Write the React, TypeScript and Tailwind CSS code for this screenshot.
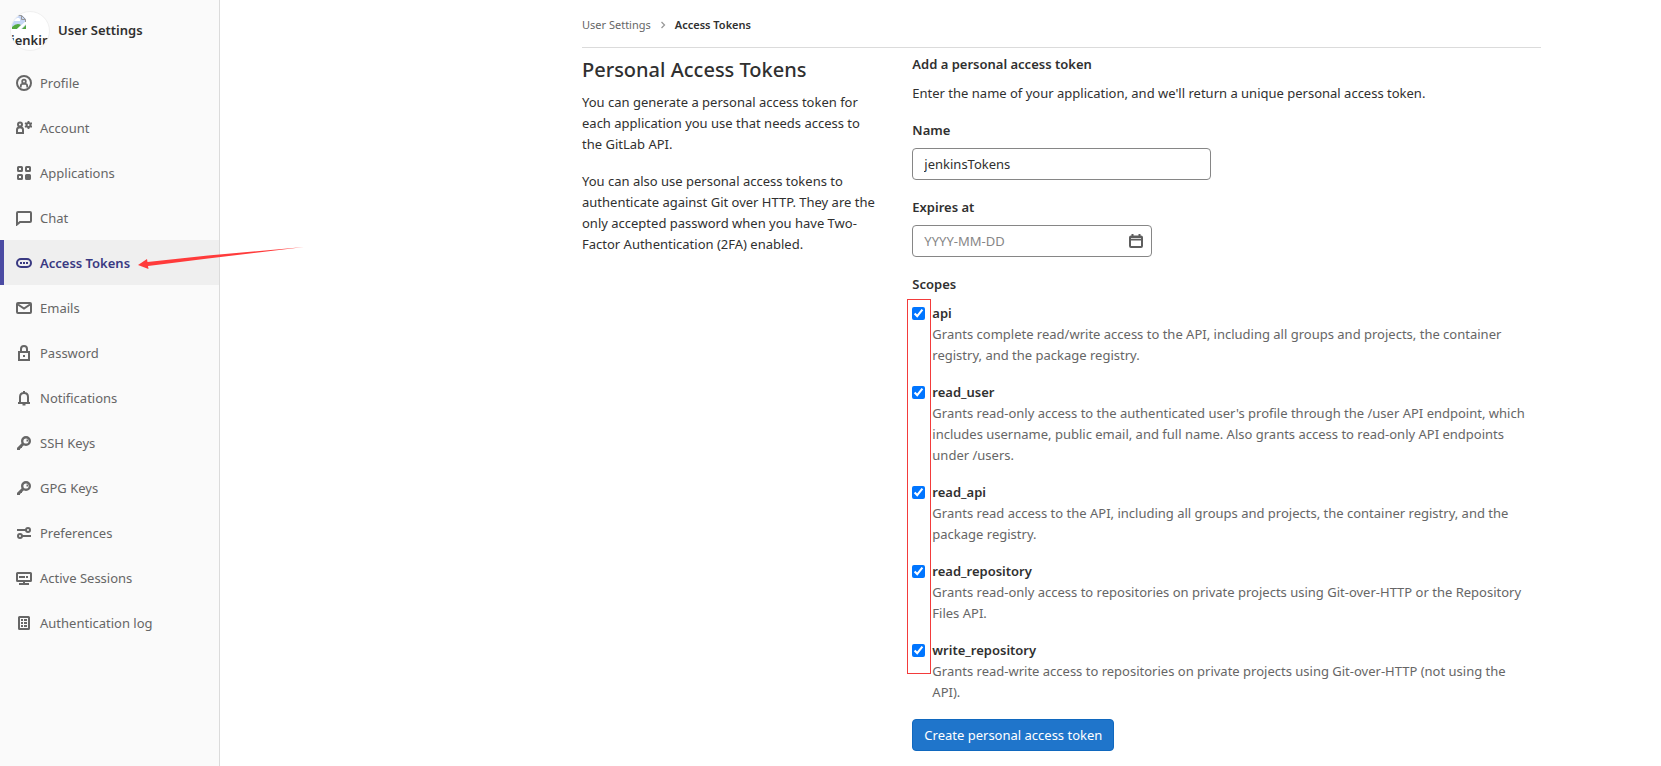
import { useState } from 'react'

const NAV_ITEMS = [
  { label: 'Profile', icon: 'profile' },
  { label: 'Account', icon: 'account' },
  { label: 'Applications', icon: 'applications' },
  { label: 'Chat', icon: 'chat' },
  { label: 'Access Tokens', icon: 'token', active: true },
  { label: 'Emails', icon: 'mail' },
  { label: 'Password', icon: 'lock' },
  { label: 'Notifications', icon: 'bell' },
  { label: 'SSH Keys', icon: 'key' },
  { label: 'GPG Keys', icon: 'key' },
  { label: 'Preferences', icon: 'preferences' },
  { label: 'Active Sessions', icon: 'monitor' },
  { label: 'Authentication log', icon: 'log' },
]

const SCOPES = [
  { id: 'api', text: 'Grants complete read/write access to the API, including all groups and projects, the container registry, and the package registry.' },
  { id: 'read_user', text: "Grants read-only access to the authenticated user's profile through the /user API endpoint, which includes username, public email, and full name. Also grants access to read-only API endpoints under /users." },
  { id: 'read_api', text: 'Grants read access to the API, including all groups and projects, the container registry, and the package registry.' },
  { id: 'read_repository', text: 'Grants read-only access to repositories on private projects using Git-over-HTTP or the Repository Files API.' },
  { id: 'write_repository', text: 'Grants read-write access to repositories on private projects using Git-over-HTTP (not using the API).' },
]

export default function App() {
  return (
    <div className="flex min-h-screen bg-white font-['Noto_Sans','Open_Sans',sans-serif] text-[13px] leading-[21px] text-[#303030]">
      <Sidebar />
      <main className="min-w-0 flex-1 pl-[362px] pr-[120px]">
        <nav aria-label="Breadcrumb" className="flex h-12 items-center gap-2 border-b border-[#dbdbdb] pt-[2px] text-[11px]">
          <a href="#settings" className="text-[#666]">User Settings</a>
          <svg viewBox="0 0 8 8" className="size-2 fill-none stroke-[#999]" strokeWidth="1.3">
            <path d="M2.5 1 5.5 4 2.5 7" />
          </svg>
          <a href="#tokens" className="font-semibold">Access Tokens</a>
        </nav>
        <div className="grid grid-cols-3 gap-8">
          <section className="pt-2">
            <h1 className="mb-2 text-xl leading-7 font-medium">Personal Access Tokens</h1>
            <p className="mb-4">
              You can generate a personal access token for each application you use that needs access to the GitLab API.
            </p>
            <p>
              You can also use personal access tokens to authenticate against Git over HTTP. They are the only accepted
              password when you have Two-Factor Authentication (2FA) enabled.
            </p>
          </section>
          <TokenForm />
        </div>
      </main>
    </div>
  )
}

function Sidebar() {
  return (
    <aside className="relative w-[220px] shrink-0 border-r border-[#dbdbdb] bg-[#fafafa]">
      <a href="#profile" className="flex h-[61px] items-center gap-2 pl-[10px] font-semibold">
        <span className="flex size-10 flex-col overflow-hidden rounded-full border border-[#f0f0f0] bg-white pt-[2px]">
          <BrokenImage />
          <span className="leading-[21px]">jenkins</span>
        </span>
        User Settings
      </a>
      <ul className="-mt-px">
        {NAV_ITEMS.map(item => (
          <li key={item.label}>
            <a
              href="#nav"
              className={
                item.active
                  ? 'flex h-[45px] items-center gap-2 border-l-4 border-[#4b4ba3] bg-[#efefef] pt-px pl-3 font-semibold text-[#393982]'
                  : 'flex h-[45px] items-center gap-2 pt-px pl-4 text-[#666]'
              }
            >
              <NavIcon name={item.icon} />
              {item.label}
            </a>
          </li>
        ))}
      </ul>
      {/* arrow pointing at the active item */}
      <svg viewBox="0 0 168 24" className="absolute top-[246px] left-[138px] h-6 w-[168px] fill-[#ff3b3b]">
        <path d="M0 19 9 13 9.500 16 70 9.500 166 1 70 12.500 10 20 10.500 23Z" />
      </svg>
    </aside>
  )
}

function TokenForm() {
  const [name, setName] = useState('jenkinsTokens')
  const [expires, setExpires] = useState('')

  return (
    <form className="col-span-2 pt-[6px]" onSubmit={e => e.preventDefault()}>
      <h2 className="mb-2 font-semibold">Add a personal access token</h2>
      <p className="mb-4">Enter the name of your application, and we'll return a unique personal access token.</p>

      <div className="mb-[17px]">
        <label htmlFor="name" className="mb-[7px] block font-semibold">Name</label>
        <input id="name" className={`${inputCls} w-[299px]`} value={name} onChange={e => setName(e.target.value)} />
      </div>

      <div className="mb-[17px]">
        <label htmlFor="expires" className="mb-[7px] block font-semibold">Expires at</label>
        <div className="relative w-60">
          <input
            id="expires"
            className={`${inputCls} w-full`}
            placeholder="YYYY-MM-DD"
            value={expires}
            onChange={e => setExpires(e.target.value)}
          />
          <svg viewBox="0 0 16 16" className="absolute top-2 right-2 size-4 fill-[#5e5e5e]">
            <path fillRule="evenodd" d="M3.500 1h2v1.500h5V1h2v1.500h.500a2 2 0 0 1 2 2V13a2 2 0 0 1-2 2H3a2 2 0 0 1-2-2V4.500a2 2 0 0 1 2-2h.500zM3 7.500V13h10V7.500zM3 5v.800h10V5z" />
          </svg>
        </div>
      </div>

      <fieldset>
        <legend className="mb-2 font-semibold">Scopes</legend>
        <div className="relative">
          {SCOPES.map(scope => <Scope key={scope.id} {...scope} />)}
          <div className="pointer-events-none absolute -top-1 -left-[5px] bottom-[45px] w-6 border border-[#f33b3b]" />
        </div>
      </fieldset>

      <button type="submit" className="h-8 rounded border border-[#1068bf] bg-[#1f75cb] px-[11px] text-white">
        Create personal access token
      </button>
    </form>
  )
}

function Scope({ id, text }: { id: string; text: string }) {
  return (
    <div className="grid grid-cols-[13px_1fr] gap-x-[7px] pr-2 pb-4">
      <input id={id} type="checkbox" defaultChecked className="mt-1 size-[13px] accent-[#0075ff]" />
      <label htmlFor={id} className="font-semibold">{id}</label>
      <p className="col-start-2 text-[#666]">{text}</p>
    </div>
  )
}

const inputCls = 'block h-8 rounded border border-[#868686] bg-white px-[11px] placeholder:text-[#868686] focus:outline-none'

function BrokenImage() {
  return (
    <svg viewBox="0 0 16 16" className="size-4 shrink-0">
      <path fill="#c6d6f5" d="M1 1h10l4 4v10H1z" />
      <path fill="#fff" d="M3 7q0-2 2-2 1-2 3-1 2 1 1 3z" />
      <path fill="#53a93f" d="M1 15v-2q5-5 9-2l-4 4z" />
      <path fill="#fff" d="m6 15 9-8v3l-5 5z" />
      <path fill="#53a93f" d="m11 15 4-4v4z" />
      <path fill="none" stroke="#999" d="M1 1.500h9.500l4 4V8M10.500 1.500v4h4" />
    </svg>
  )
}

function NavIcon({ name }: { name: string }) {
  return (
    <svg viewBox="0 0 16 16" className="size-4 shrink-0 fill-none stroke-current" strokeWidth="2">
      {name === 'profile' && (
        <>
          <circle cx="8" cy="8" r="7" />
          <circle cx="8" cy="6.500" r="1.800" strokeWidth="1.800" />
          <path strokeWidth="1.800" d="M4.800 12.500V11q0-2.200 2-2.200h2.400q2 0 2 2.200v1.500" />
        </>
      )}
      {name === 'account' && (
        <>
          <circle cx="4" cy="4.500" r="2" />
          <path d="M1 13v-3q0-2.500 2-2.500h2q2 0 2 2.500v3z" />
          <circle cx="12.500" cy="5" r="2" strokeWidth="2" />
          <path strokeWidth="1.800" d="M12.500 1v2M12.500 7v2M9 3l1.800 1M14.200 6 16 7M9 7l1.800-1M14.200 4 16 3" />
        </>
      )}
      {name === 'applications' && (
        <>
          <rect x="2" y="2" width="4" height="4" rx=".5" />
          <rect x="10" y="2" width="4" height="4" rx=".5" />
          <rect x="2" y="10" width="4" height="4" rx=".5" />
          <rect x="10" y="10" width="4" height="4" rx=".5" className="fill-current" />
        </>
      )}
      {name === 'chat' && <path d="M1 14.500V3q0-1 1-1h12q1 0 1 1v8q0 1-1 1H4z" />}
      {name === 'token' && (
        <>
          <rect x="1" y="4" width="14" height="8" rx="4" />
          <path d="M4 8h2M7 8h2M10 8h2" />
        </>
      )}
      {name === 'mail' && (
        <>
          <rect x="1" y="3" width="14" height="10" rx="1" />
          <path d="m2 4.500 6 4 6-4" />
        </>
      )}
      {name === 'lock' && (
        <>
          <path d="M3 7h10v8H3zM5 7V4q0-3 3-3t3 3v3" />
          <path d="M7 11h2" />
        </>
      )}
      {name === 'bell' && (
        <>
          <path d="M2 13h12M4 12.500V7q0-4 4-4t4 4v5.500M8 1v2" />
          <path d="M6.500 14.500h3" />
        </>
      )}
      {name === 'key' && (
        <>
          <circle cx="10" cy="6" r="3.800" strokeWidth="2.400" />
          <path strokeWidth="3" d="m7.500 8.500-5.500 5.500" />
          <path d="M1 14h3M4 12h2M10.500 5.500h1.500" />
        </>
      )}
      {name === 'preferences' && (
        <>
          <path d="M1 5h9M6 11h9" />
          <circle cx="12" cy="5" r="2" />
          <circle cx="4" cy="11" r="2" />
        </>
      )}
      {name === 'monitor' && (
        <>
          <rect x="1" y="3" width="14" height="8" rx=".5" />
          <path d="M3 7h6M10 7h2M8 11v3M3 14h10" />
        </>
      )}
      {name === 'log' && (
        <>
          <rect x="3" y="2" width="10" height="12" rx=".5" />
          <path d="M5 5h2M5 8h2M5 11h2M8 5h3M8 8h3M8 11h3" />
        </>
      )}
    </svg>
  )
}
